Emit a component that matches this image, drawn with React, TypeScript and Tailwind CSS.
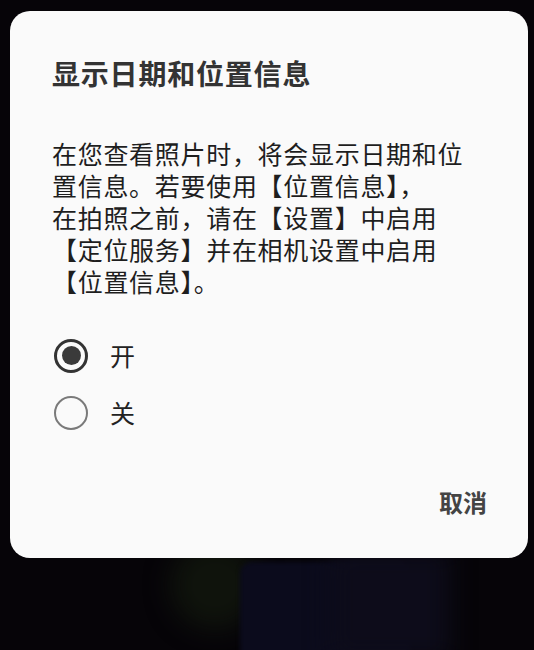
import React from "react";

const body = [
  "在您查看照片时，将会显示日期和位",
  "置信息。若要使用【位置信息】，",
  "在拍照之前，请在【设置】中启用",
  "【定位服务】并在相机设置中启用",
  "【位置信息】。",
];

function Radio({ checked, label }: { checked: boolean; label: string }) {
  return (
    <div className="flex items-center h-[57px]">
      {checked ? (
        <div className="w-[34px] h-[34px] rounded-full border-[3px] border-[#333] flex items-center justify-center">
          <div className="w-[19px] h-[19px] rounded-full bg-[#3a3a3a]" />
        </div>
      ) : (
        <div className="w-[34px] h-[34px] rounded-full border-2 border-[#7a7a7a]" />
      )}
      <span className="ml-[22px] text-[25px] leading-none text-[#222]">{label}</span>
    </div>
  );
}

export default function App() {
  return (
    <div
      className="relative w-[534px] h-[650px] overflow-hidden bg-[#060408]"
      style={{ fontFamily: '"Noto Sans CJK SC", "Noto Sans", sans-serif' }}
    >
      {/* dim photo behind the dialog */}
      <div className="absolute left-[170px] top-[540px] w-[90px] h-[90px] rounded-full bg-[#0f130c] blur-md" />
      <div className="absolute left-[240px] top-[562px] w-[170px] h-[100px] rounded-xl bg-[#0b0b1c] blur-[2px]" />
      <div className="absolute left-[330px] top-[550px] w-[120px] h-[110px] bg-[#0d0c1a] blur-md" />

      <div className="relative ml-[10px] mt-[11px] w-[518px] h-[547px] rounded-[20px] bg-[#fafafa] flex flex-col pl-[42px] pr-[41px]">
        <h1 className="mt-[44px] text-[28px] leading-[36px] font-bold tracking-[0.8px] text-[#333]">
          显示日期和位置信息
        </h1>
        <div
          className="mt-[48px] text-[25px] leading-[32px] tracking-[0.7px] text-[#1e1e1e]"
          style={{ fontFamily: '"Liberation Sans", "Noto Sans CJK SC", sans-serif' }}
        >
          {body.map((l) => (
            <div key={l} className="h-[32px]">
              {l}
            </div>
          ))}
        </div>
        <div className="mt-[28px] ml-[2px] flex flex-col">
          <Radio checked label="开" />
          <Radio checked={false} label="关" />
        </div>
        <div className="mt-auto mb-[44px] flex justify-end">
          <span className="text-[24px] leading-none font-bold text-[#444]">取消</span>
        </div>
      </div>
    </div>
  );
}
